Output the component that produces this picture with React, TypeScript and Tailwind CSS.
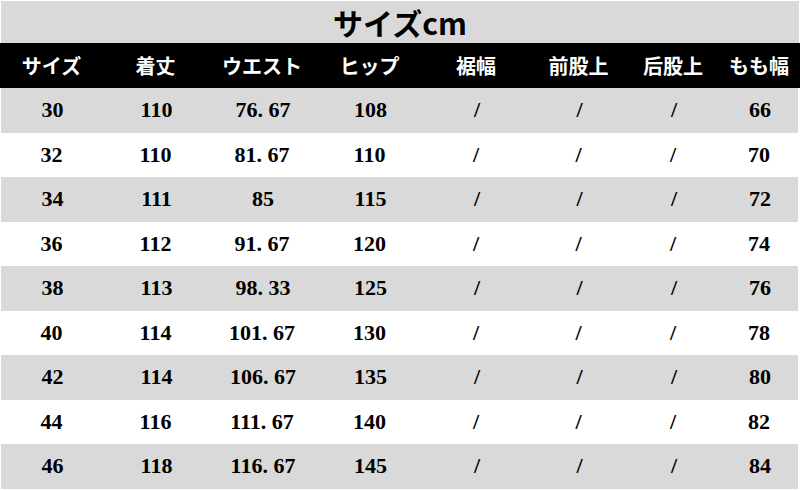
import React from "react";

const headers = ["サイズ", "着丈", "ウエスト", "ヒップ", "裾幅", "前股上", "后股上", "もも幅"];

const rows: string[][] = [
  ["30", "110", "76.67", "108", "/", "/", "/", "66"],
  ["32", "110", "81.67", "110", "/", "/", "/", "70"],
  ["34", "111", "85", "115", "/", "/", "/", "72"],
  ["36", "112", "91.67", "120", "/", "/", "/", "74"],
  ["38", "113", "98.33", "125", "/", "/", "/", "76"],
  ["40", "114", "101.67", "130", "/", "/", "/", "78"],
  ["42", "114", "106.67", "135", "/", "/", "/", "80"],
  ["44", "116", "111.67", "140", "/", "/", "/", "82"],
  ["46", "118", "116.67", "145", "/", "/", "/", "84"],
];

const grid = "grid grid-cols-[103px_105px_108px_107px_106px_99px_90px_82px]";

function Num({ v }: { v: string }) {
  if (v.includes(".")) {
    const [a, b] = v.split(".");
    return (
      <span>
        {a}
        <span className="inline-block w-[0.5em] text-left">.</span>
        {b}
      </span>
    );
  }
  return <span>{v}</span>;
}

export default function App() {
  return (
    <div className="w-[800px] h-[490px] bg-white overflow-hidden pt-[1px]">
      <div className="h-[42px] mx-[1px] bg-[#d9d9d9] flex items-center justify-center">
        <span
          className="text-[30px] font-bold text-black leading-none"
          style={{ fontFamily: '"Noto Sans CJK JP", "Noto Sans", sans-serif' }}
        >
          サイズcm
        </span>
      </div>
      <div className={`${grid} h-[45px] bg-black items-center`}>
        {headers.map((h) => (
          <div
            key={h}
            className="text-center text-white text-[20px] font-bold leading-none"
            style={{ fontFamily: '"Noto Sans CJK JP", sans-serif' }}
          >
            {h}
          </div>
        ))}
      </div>
      {rows.map((r, i) => (
        <div
          key={i}
          className={`${grid} h-[44.5px] items-center ${i % 2 === 0 ? "bg-[#d9d9d9] mx-[1px] mr-[2px]" : "bg-white"}`}
          style={{ fontFamily: '"Liberation Serif", serif' }}
        >
          {r.map((c, j) => (
            <div key={j} className="text-center text-black text-[22px] font-bold leading-none">
              <Num v={c} />
            </div>
          ))}
        </div>
      ))}
    </div>
  );
}
